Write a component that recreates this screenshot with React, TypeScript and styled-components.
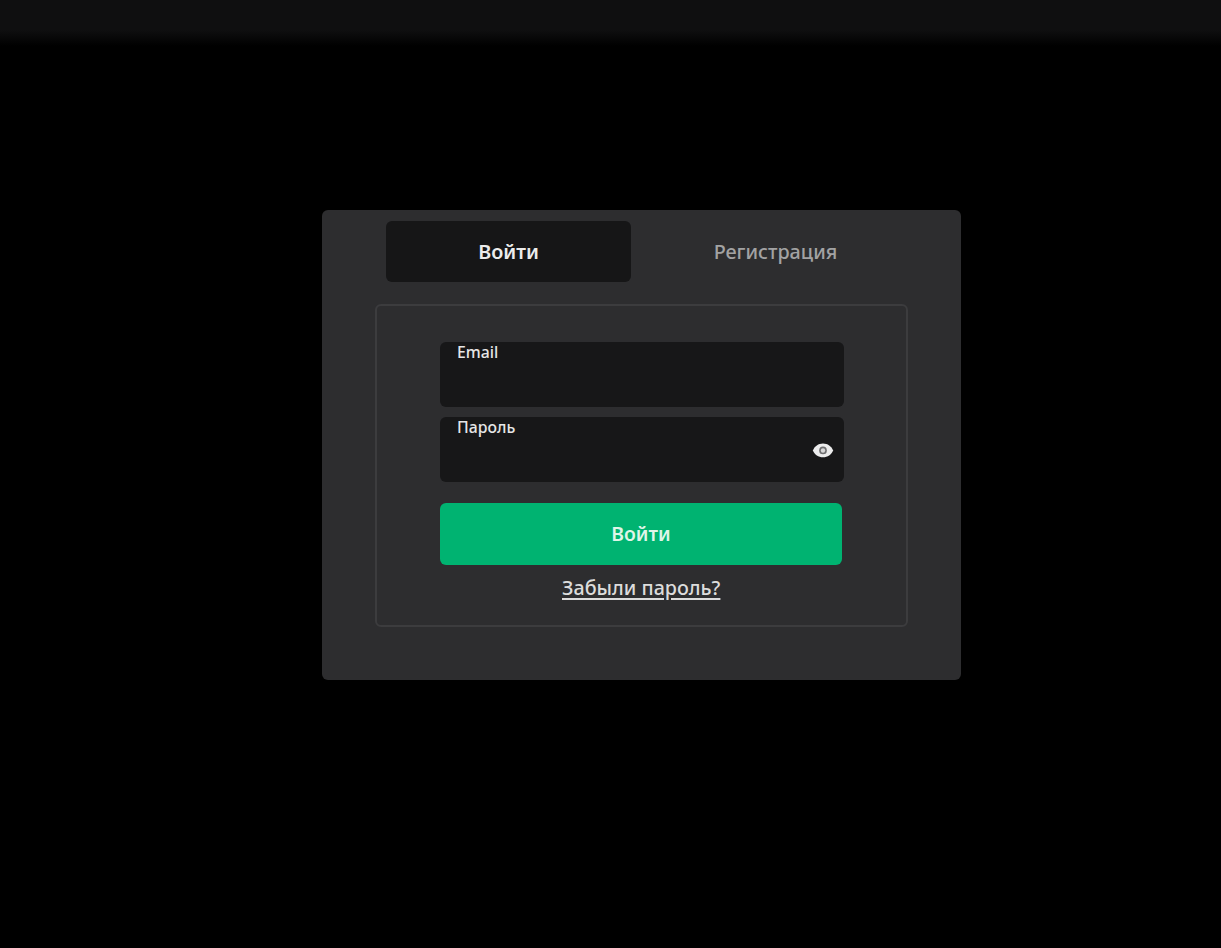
import React from "react";
import styled, { createGlobalStyle } from "styled-components";

const Global = createGlobalStyle`
  html, body { margin: 0; padding: 0; background: #000; }
  body { font-family: "Noto Sans", "Open Sans", sans-serif; }
  * { box-sizing: border-box; }
`;

const Page = styled.div`
  width: 1221px;
  height: 948px;
  background: #000;
  display: flex;
  flex-direction: column;
  overflow: hidden;
`;

const TopBar = styled.header`
  height: 46px;
  flex: none;
  background: linear-gradient(#0f0f10 0, #0f0f10 30px, #000 46px);
`;

const Main = styled.main`
  padding: 164px 0 0 322px;
`;

const Card = styled.section`
  width: 639px;
  height: 470px;
  background: #2d2d2f;
  border-radius: 6px;
  padding: 11px 53px 0;
`;

const Tabs = styled.nav`
  display: grid;
  grid-template-columns: 245px 245px;
  column-gap: 22px;
  justify-content: start;
  margin-left: 11px;
  margin-bottom: 22px;
`;

const Tab = styled.button<{ $active?: boolean }>`
  height: 61px;
  border: 0;
  border-radius: 6px;
  background: ${(p) => (p.$active ? "#161617" : "transparent")};
  color: ${(p) => (p.$active ? "#ececec" : "#a2a2a3")};
  font: ${(p) => (p.$active ? 600 : 500)} 19.8px "Noto Sans", sans-serif;
  padding: 0;
`;

const Panel = styled.div`
  width: 533px;
  height: 323px;
  border: 2px solid #3c3c3e;
  border-radius: 6px;
  padding: 36px 0 0 63px;
  display: flex;
  flex-direction: column;
  align-items: flex-start;
`;

const Field = styled.label`
  position: relative;
  display: block;
  width: 404px;
  height: 65px;
  background: #171718;
  border-radius: 6px;
  margin-bottom: 10px;
  padding: 0 17px;
`;

const FieldLabel = styled.span`
  display: block;
  color: #e6e6e6;
  font-size: 15.8px;
  font-weight: 500;
  line-height: 21px;
`;

const EyeButton = styled.span`
  position: absolute;
  right: 10px;
  top: 22px;
  width: 22px;
  height: 22px;
  display: flex;
  align-items: center;
  justify-content: center;
`;

const Submit = styled.button`
  width: 402px;
  height: 62px;
  flex: none;
  margin-top: 11px;
  border: 0;
  border-radius: 6px;
  background: #00b371;
  color: #dff5e8;
  font: 600 19.4px "Noto Sans", sans-serif;
  padding: 0 0 2px;
`;

const Forgot = styled.a`
  align-self: flex-start;
  margin: 9px 0 0 122px;
  color: #dcdcdc;
  font-size: 19.7px;
  font-weight: 500;
  line-height: 28px;
  text-decoration: underline;
  text-decoration-thickness: 2px;
  text-underline-offset: 3px;
`;

const Eye = () => (
  <svg width="22" height="22" viewBox="0 0 24 24">
    <path
      fill="#ececec"
      d="M12 5C7 5 2.7 8.1 1 12.5 2.7 16.9 7 20 12 20s9.3-3.1 11-7.5C21.3 8.1 17 5 12 5z"
    />
    <circle cx="12" cy="12.5" r="4.2" fill="#6f6f70" />
    <circle cx="12" cy="12.5" r="2.4" fill="#d8d8d8" />
  </svg>
);

export default function App() {
  return (
    <Page>
      <Global />
      <TopBar />
      <Main>
        <Card>
          <Tabs>
            <Tab $active>Войти</Tab>
            <Tab>Регистрация</Tab>
          </Tabs>
          <Panel>
            <Field>
              <FieldLabel>Email</FieldLabel>
            </Field>
            <Field>
              <FieldLabel>Пароль</FieldLabel>
              <EyeButton>
                <Eye />
              </EyeButton>
            </Field>
            <Submit>Войти</Submit>
            <Forgot href="#">Забыли пароль?</Forgot>
          </Panel>
        </Card>
      </Main>
    </Page>
  );
}
